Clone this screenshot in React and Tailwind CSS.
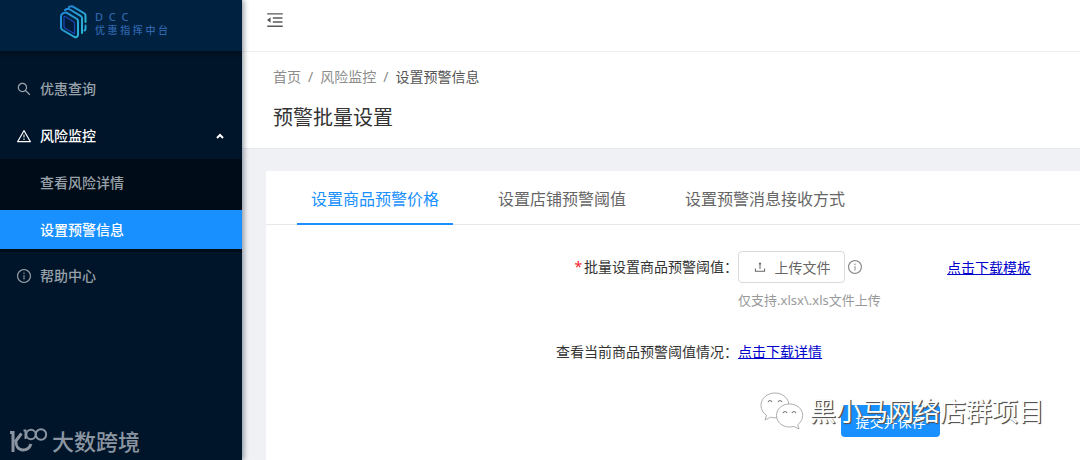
import React from 'react';
import {
  AiOutlineInfoCircle,
  AiOutlineMenuFold,
  AiOutlineSearch,
  AiOutlineUpload,
  AiOutlineWarning,
} from 'react-icons/ai';

const tabs = ['设置商品预警价格', '设置店铺预警阈值', '设置预警消息接收方式'];

function Logo() {
  return (
    <a href="#" className="flex h-[51px] items-center gap-2 bg-[#002140] pb-2 pl-[59px]">
      <svg width="28" height="34" viewBox="0 0 28 34" fill="none" strokeLinejoin="round" strokeLinecap="round">
        <defs>
          <linearGradient id="logo" x1="0" y1="0" x2="1" y2="1">
            <stop offset="0" stopColor="#2389d8" />
            <stop offset="1" stopColor="#2cb4d4" />
          </linearGradient>
        </defs>
        <path d="M5 12.500q0-1.500 1.500-.8l8 5q1 .7 1 2v10l-9.500-5.500q-1-.7-1-2z" fill="#001a3a" stroke="#1747b5" strokeWidth="1.200" />
        <g stroke="url(#logo)" strokeWidth="2">
          <path d="M2 11.500q0-2 1.500-2.800l2-1q1-.5 2 0l10.500 6.300q1 .7 1 2v13.500q0 2-1.500 2.500-1 .5-2 0L3.500 25Q2 24 2 22.500z" />
          <path d="M6 5l2-1q1-.5 2 0l12 7.200q1 .7 1 2V28" />
          <path d="M10 2l1.500-.6q1-.5 2 0L25.500 8.500q1 .7 1 2V17" />
          <path d="M26.500 20.500V24q0 1-1 1.500" />
        </g>
      </svg>
      <span className="flex flex-col pt-1 text-[#2f66ad]">
        <span className="text-[11px] leading-[12px]">D&nbsp; C&nbsp; C</span>
        <span className="text-[10px] leading-[14px]">优 惠 指 挥 中 台</span>
      </span>
    </a>
  );
}

function SiteMark() {
  return (
    <div className="absolute bottom-[6px] left-[10px] flex items-center gap-1 text-[#8b95a1]">
      <svg width="38" height="26" viewBox="0 0 38 26" fill="none" stroke="currentColor">
        <path d="M0 4.500h3V24" strokeWidth="3" />
        <path d="M11.500 5.500L5 14M6 12.500c-.5 5 2 9 6.500 9.500 4 .2 7-2 8.500-6" strokeWidth="3" />
        <path d="M13.500 2.500h2V11" strokeWidth="2" />
        <circle cx="21" cy="6.500" r="4.700" strokeWidth="2" />
        <circle cx="31" cy="6.500" r="5.200" strokeWidth="2" />
      </svg>
      <span className="text-[22px] leading-[26px] font-medium">大数跨境</span>
    </div>
  );
}

function Sidebar() {
  return (
    <aside className="relative z-10 w-[242px] shrink-0 bg-[#001529] text-[14px] font-medium text-[#98a1a9] shadow-[2px_0_5px_rgba(0,21,41,0.4)]">
      <Logo />
      <nav className="bg-linear-to-b from-[#000f20] to-[#001529] to-[8px] pt-[18px]">
        <a href="#" className="flex h-[39px] items-center gap-2 pl-4">
          <AiOutlineSearch size={16} />
          优惠查询
        </a>
        <a href="#" className="mt-2 flex h-[39px] items-center gap-2 pl-4 text-white">
          <AiOutlineWarning size={16} />
          风险监控
          <svg className="mr-[18px] ml-auto" width="8" height="6" viewBox="0 0 8 6" fill="none" stroke="currentColor" strokeWidth="2">
            <path d="M1 5l3-3 3 3" />
          </svg>
        </a>
        <div className="mt-1 flex flex-col gap-2 bg-[#000c17] pt-1 pb-[3px]">
          <a href="#" className="flex h-[39px] items-center pl-10">
            查看风险详情
          </a>
          <a href="#" aria-current="page" className="flex h-[39px] items-center bg-[#1890ff] pl-10 text-white">
            设置预警信息
          </a>
        </div>
        <a href="#" className="mt-1 flex h-[39px] items-center gap-2 pl-4">
          <AiOutlineInfoCircle size={16} />
          帮助中心
        </a>
      </nav>
      <SiteMark />
    </aside>
  );
}

function PageHeader() {
  return (
    <div className="border-b border-[#e4e6ea] bg-white py-[14px] pl-[31px]">
      <nav aria-label="breadcrumb" className="flex gap-[7px] text-[14px] leading-[22px] text-[#8c8c8c]">
        <a href="#">首页</a>
        <span>/</span>
        <a href="#">风险监控</a>
        <span>/</span>
        <span className="text-[#555555]">设置预警信息</span>
      </nav>
      <h1 className="mt-[14px] text-[20px] leading-8 text-[#333333]">预警批量设置</h1>
    </div>
  );
}

function Tabs() {
  return (
    <div role="tablist" className="flex border-b border-[#e8e8e8] pl-[31px] text-[16px]">
      {tabs.map((tab, i) => (
        <button
          key={tab}
          type="button"
          role="tab"
          aria-selected={i === 0}
          className={
            i === 0
              ? '-mb-px mr-[31px] h-[54px] border-b-2 border-[#1890ff] px-[14px] pt-[3px] text-[#1890ff]'
              : 'mr-[31px] h-[53px] px-[14px] pt-[2px] text-[#666666]'
          }
        >
          {tab}
        </button>
      ))}
    </div>
  );
}

function SettingsForm() {
  return (
    <form className="grid grid-cols-[58%_1fr] pt-[26px] text-[14px] text-[#333333]">
      <label htmlFor="upload" className="text-right leading-8">
        <span className="mr-[2px] text-[#f5222d]">*</span>
        批量设置商品预警阈值：
      </label>
      <div>
        <div className="flex items-center">
          <button
            id="upload"
            type="button"
            className="flex h-8 w-[107px] items-center justify-center gap-2 rounded border border-[#d9d9d9] text-[#666666]"
          >
            <AiOutlineUpload size={14} />
            上传文件
          </button>
          <AiOutlineInfoCircle size={16} className="ml-[2px] text-[#8c8c8c]" />
          <a href="#" className="ml-[84px] text-[#0000cc] underline">
            点击下载模板
          </a>
        </div>
        <p className="mt-[6px] text-[13px] leading-[22px] text-[#999999]">仅支持.xlsx\.xls文件上传</p>
      </div>
      <span className="mt-[25px] text-right leading-8">查看当前商品预警阈值情况：</span>
      <a href="#" className="mt-[25px] leading-8 text-[#0000cc] underline">
        点击下载详情
      </a>
      <button
        type="submit"
        className="col-start-2 mt-[37px] ml-[103px] h-8 w-[99px] rounded bg-[#1890ff] text-white"
      >
        提交并保存
      </button>
    </form>
  );
}

function ChannelMark() {
  return (
    <div className="pointer-events-none absolute right-9 bottom-[30px] flex items-center gap-[6px]">
      <svg width="44" height="38" viewBox="0 0 44 38" fill="#ffffff" stroke="#999999" strokeWidth="0.800">
        <path d="M15 1C7 1 1 6.500 1 13.500c0 4 2 7.500 5.500 9.800L5 28l5.500-2.800c1.500.5 3 .6 4.500.6 8 0 14-5.500 14-12.300S23 1 15 1z" />
        <path d="M29.500 12C22 12 16.500 17 16.500 23.500S22 35 29.500 35c1.500 0 3-.2 4.300-.6L39 37l-1.300-4.300c3-2.200 5-5.500 5-9.200C42.700 17 37 12 29.500 12z" />
        <path d="M8 10q2-3 4 0M18 10q2-3 4 0M23 21q2-3 4 0M32 21q2-3 4 0" fill="none" stroke="#777777" strokeWidth="1.200" />
      </svg>
      <span className="text-[26px] leading-8 text-white [text-shadow:1px_1px_0_#555555,1px_1px_1px_#444444]">
        黑小马网络店群项目
      </span>
    </div>
  );
}

export default function App() {
  return (
    <div className="relative flex min-h-screen overflow-hidden bg-[#eff1f5] font-['Noto_Sans','Noto_Sans_CJK_SC',sans-serif]">
      <Sidebar />
      <div className="flex min-w-0 flex-1 flex-col">
        <header className="flex h-[52px] items-center border-b border-[#eceef1] bg-white pb-3 pl-[23px]">
          <button type="button" aria-label="收起菜单" className="text-[#595959]">
            <AiOutlineMenuFold size={20} />
          </button>
        </header>
        <PageHeader />
        <main className="mt-[22px] ml-6 flex-1 bg-white">
          <Tabs />
          <SettingsForm />
        </main>
      </div>
      <ChannelMark />
    </div>
  );
}
